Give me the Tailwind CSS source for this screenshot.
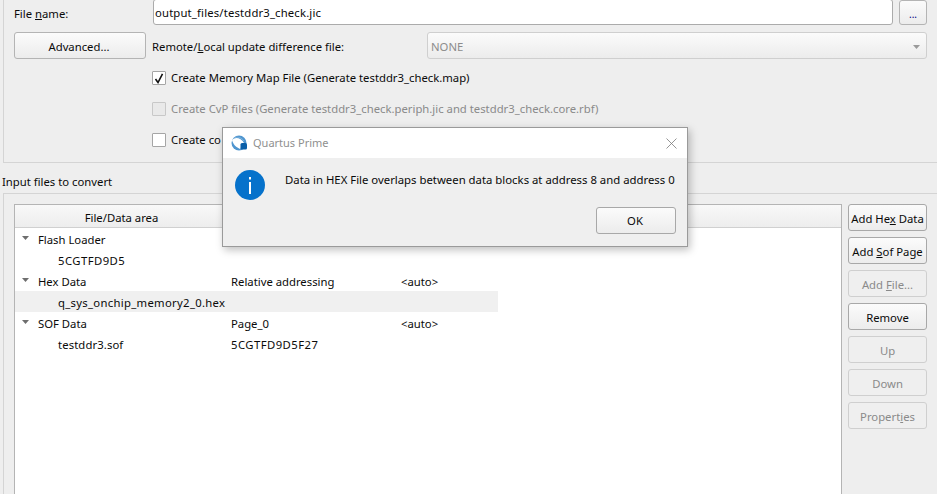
<!DOCTYPE html>
<html>
<head>
<meta charset="utf-8">
<script src="https://cdn.jsdelivr.net/npm/@tailwindcss/browser@4"></script>
</head>
<body class="m-0">
<div class="relative w-[937px] h-[494px] overflow-hidden bg-[#eeeeee] text-[11.3px] leading-[16px] text-[#0a0a0a] font-['Noto_Sans','Open_Sans',sans-serif]">
  <!-- Top group -->
  <div class="ml-[3px] h-[164px] -mt-px border border-t-0 border-r-0 border-[#d4d4d4] pl-[10px] pr-[10px] flex flex-col">
    <div class="flex items-center h-[26px]">
      <span class="w-[139px] pt-[3px]">File <u>n</u>ame:</span>
      <div class="flex-1 h-full bg-white border border-[#ababab] rounded-[3px] pl-[1px] pt-[2px] flex items-center tracking-[0.16px]">output_files/testddr3_check.jic</div>
      <div class="ml-[6px] w-[28px] h-[25px] border border-[#b4b4b4] rounded-[3px] bg-gradient-to-b from-[#fbfbfb] to-[#ececec] text-center leading-[22px] text-[#000080] text-[10px] pt-[2px]">...</div>
    </div>
    <div class="flex items-center h-[27px] mt-[7px]">
      <div class="w-[132px] h-[27px] pt-[2px] border border-[#b4b4b4] rounded-[3px] bg-gradient-to-b from-[#fbfbfb] to-[#ececec] flex items-center justify-center pr-[2px]">Advanced...</div>
      <span class="ml-[6px] w-[275px] pt-[2px]">Remote/<u>L</u>ocal update difference file:</span>
      <div class="flex-1 h-[27px] border border-[#cfcfcf] rounded-[3px] bg-gradient-to-b from-[#fbfbfb] to-[#ececec] flex items-center justify-between pl-[3px] pr-[6px] pt-[2px] text-[#8c8c8c]">
        <span>NONE</span>
        <svg width="7" height="4" viewBox="0 0 7 4"><path d="M0 0h7L3.500 4z" fill="#9a9a9a"/></svg>
      </div>
    </div>
    <div class="flex flex-col ml-[138px] mt-[12px] gap-[17px]">
      <div class="flex items-center h-[14px] gap-[5px]">
        <div class="w-[14px] h-[14px] bg-white border border-[#a5a5a5] rounded-[1px] flex items-center justify-center">
          <svg width="10" height="11" viewBox="0 0 10 11"><path d="M1.500 6L4 9.500L8.500 0.800" fill="none" stroke="#111" stroke-width="1.600"/></svg>
        </div>
        <span>Create Memory Map File (Generate testddr3_check.map)</span>
      </div>
      <div class="flex items-center h-[14px] gap-[5px] text-[#8a8a8a]">
        <div class="w-[14px] h-[14px] bg-[#e9e9e9] border border-[#c8c8c8] rounded-[1px]"></div>
        <span>Create CvP files (Generate testddr3_check.periph.jic and testddr3_check.core.rbf)</span>
      </div>
      <div class="flex items-center h-[14px] gap-[5px]">
        <div class="w-[14px] h-[14px] bg-white border border-[#a5a5a5] rounded-[1px]"></div>
        <span>Create co</span>
      </div>
    </div>
  </div>
  <!-- Input label -->
  <div class="pl-[2px] mt-[11px] h-[16px]">Input files to convert</div>
  <!-- Bottom group -->
  <div class="ml-[3px] mt-[3px] h-[320px] border border-r-0 border-[#d4d4d4] pl-[10px] pr-[10px] pt-[10px] flex gap-[6px]">
    <div class="flex-1 h-[320px] bg-white border border-[#b4b4b4]">
      <div class="h-[23px] pt-[1px] bg-gradient-to-b from-[#f8f8f8] to-[#ededed] border-b border-[#d0d0d0] flex">
        <div class="w-[213px] text-center leading-[23px]">File/Data area</div>
      </div>
      <div>
        <div class="flex items-center h-[21px] pt-[2px]"><svg class="ml-[7px] mr-[9px] -mt-[4px]" width="7" height="4" viewBox="0 0 7 4"><path d="M0 0h7L3.500 4z" fill="#6e6e6e"/></svg><span>Flash Loader</span></div>
        <div class="flex items-center h-[21px] pt-[2px] pl-[43px]"><span class="tracking-[0.45px]">5CGTFD9D5</span></div>
        <div class="flex items-center h-[21px] pt-[2px]"><svg class="ml-[7px] mr-[9px] -mt-[4px]" width="7" height="4" viewBox="0 0 7 4"><path d="M0 0h7L3.500 4z" fill="#6e6e6e"/></svg><span class="w-[193px]">Hex Data</span><span class="w-[170px]">Relative addressing</span><span>&lt;auto&gt;</span></div>
        <div class="flex items-center h-[21px] pt-[2px] w-[483px] pl-[43px] bg-[#f0f0f0]"><span class="tracking-[0.3px]">q_sys_onchip_memory2_0.hex</span></div>
        <div class="flex items-center h-[21px] pt-[2px]"><svg class="ml-[7px] mr-[9px] -mt-[4px]" width="7" height="4" viewBox="0 0 7 4"><path d="M0 0h7L3.500 4z" fill="#6e6e6e"/></svg><span class="w-[193px]">SOF Data</span><span class="w-[170px]">Page_0</span><span>&lt;auto&gt;</span></div>
        <div class="flex items-center h-[21px] pt-[2px] pl-[43px]"><span class="w-[173px] tracking-[0.1px]">testddr3.sof</span><span class="tracking-[0.45px]">5CGTFD9D5F27</span></div>
      </div>
    </div>
    <div class="w-[79px] flex flex-col gap-[6px]">
      <div class="h-[27px] pt-[2px] border border-[#a8a8a8] rounded-[3px] bg-gradient-to-b from-[#fbfbfb] to-[#ececec] flex items-center justify-center whitespace-nowrap"><span>Add He<u>x</u> Data</span></div>
      <div class="h-[27px] pt-[2px] border border-[#a8a8a8] rounded-[3px] bg-gradient-to-b from-[#fbfbfb] to-[#ececec] flex items-center justify-center whitespace-nowrap"><span>Add <u>S</u>of Page</span></div>
      <div class="h-[27px] pt-[2px] border border-[#cfcfcf] rounded-[3px] bg-[#efefef] text-[#8a8a8a] flex items-center justify-center"><span>Add <u>F</u>ile...</span></div>
      <div class="h-[27px] pt-[2px] border border-[#a8a8a8] rounded-[3px] bg-gradient-to-b from-[#fbfbfb] to-[#ececec] flex items-center justify-center">Remove</div>
      <div class="h-[27px] pt-[2px] border border-[#cfcfcf] rounded-[3px] bg-[#efefef] text-[#8a8a8a] flex items-center justify-center">Up</div>
      <div class="h-[27px] pt-[2px] border border-[#cfcfcf] rounded-[3px] bg-[#efefef] text-[#8a8a8a] flex items-center justify-center">Down</div>
      <div class="h-[27px] pt-[2px] border border-[#cfcfcf] rounded-[3px] bg-[#efefef] text-[#8a8a8a] flex items-center justify-center"><span>Propert<u>i</u>es</span></div>
    </div>
  </div>
  <!-- Dialog -->
  <div class="absolute left-[222px] top-[127px] w-[466px] h-[120px] border border-[#9a9a9a] bg-[#efefef] shadow-[2px_3px_8px_rgba(0,0,0,0.25)] flex flex-col">
    <div class="h-[30px] bg-white flex items-center pl-[8px] pr-[10px]">
      <svg width="16" height="16" viewBox="0 0 16 16" class="mr-[6px]">
        <circle cx="8" cy="8" r="7.500" fill="#4f95cf"/>
        <path d="M1 5C4 1.500 10 2.500 13 8L9 14C5.500 12.500 2 9.500 1 5Z" fill="#ffffff"/>
        <path d="M4 2.500C7 1.500 11 3 13 6" stroke="#7db4de" stroke-width="1" fill="none"/>
        <rect x="9.500" y="8" width="6.500" height="6.500" rx="1.500" fill="#0a5fa8"/>
      </svg>
      <span class="text-[#8f8f8f] text-[11px] -mt-[1px]">Quartus Prime</span>
      <svg class="ml-auto" width="11" height="11" viewBox="0 0 11 11"><path d="M0.500 0.500L10.500 10.500M10.500 0.500L0.500 10.500" stroke="#7a7a7a" stroke-width="0.800" fill="none"/></svg>
    </div>
    <div class="flex pl-[12px] pt-[12px]">
      <svg width="30" height="30" viewBox="0 0 30 30"><circle cx="15" cy="15" r="15" fill="#0672cb"/><rect x="14" y="12" width="2" height="12" fill="#fff"/><rect x="14" y="7" width="2" height="2.500" fill="#fff"/></svg>
      <span class="ml-[20px] mt-[2px] whitespace-nowrap text-[11.35px]">Data in HEX File overlaps between data blocks at address 8 and address 0</span>
    </div>
    <div class="flex justify-end pr-[11px] mt-[7px]">
      <div class="w-[80px] h-[27px] pr-[2px] border border-[#a8a8a8] rounded-[3px] bg-gradient-to-b from-[#fbfbfb] to-[#ececec] flex items-center justify-center">OK</div>
    </div>
  </div>
</div>
</body>
</html>
